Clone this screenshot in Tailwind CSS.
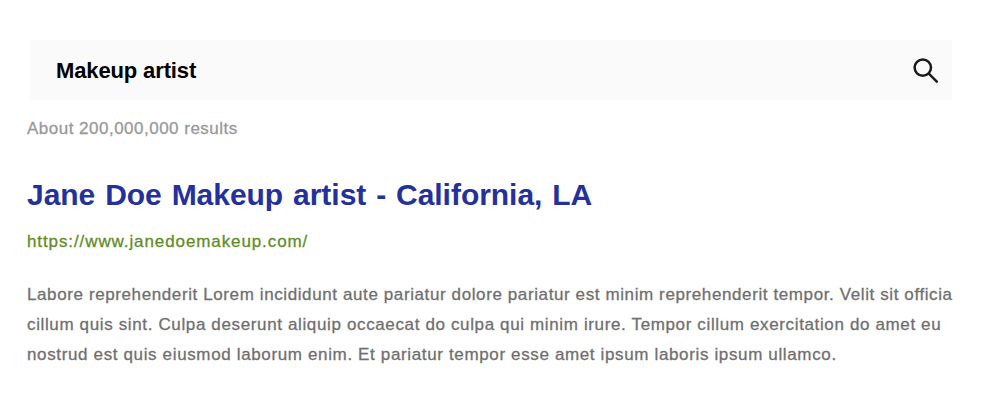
<!DOCTYPE html>
<html lang="en"><head><meta charset="utf-8"><title>Search results</title>
<script src="https://cdn.jsdelivr.net/npm/@tailwindcss/browser@4"></script></head>
<body class="bg-white overflow-hidden font-['Liberation_Sans',Arial,sans-serif]">
<main class="pt-10 pl-[27px] whitespace-nowrap">
<div class="ml-[3px] w-[922px] h-[60px] bg-[#fafafa] flex items-center justify-between pl-[26px] pr-[13px]">
<span class="text-[22px] tracking-[-0.13px] font-bold text-black">Makeup artist</span>
<svg class="w-[26px] h-[26px]" viewBox="0 0 26 26" fill="none" stroke="#1a1a1a" stroke-width="2.5" stroke-linecap="round"><circle cx="9.8" cy="10.6" r="8.2"/><path d="M15.8 16.6l8 8"/></svg>
</div>
<p class="mt-[18px] leading-[22px] text-[17px] tracking-[0.49px] text-[#999] [-webkit-text-stroke:0.3px_#999]">About 200,000,000 results</p>
<h1 class="mt-[36px] leading-[38px] text-[30px] tracking-[-0.03px] [word-spacing:1.6px] font-bold text-[#24309c]">Jane Doe Makeup artist - California, LA</h1>
<p class="mt-[17px] leading-[22px] text-[17px] tracking-[0.9px] text-[#648c25] [-webkit-text-stroke:0.3px_#648c25]">https://www.janedoemakeup.com/</p>
<div class="mt-[27px] text-[17px] leading-[30px] text-[#6f6f6f] [-webkit-text-stroke:0.3px_#6f6f6f]">
<p class="tracking-[0.605px]">Labore reprehenderit Lorem incididunt aute pariatur dolore pariatur est minim reprehenderit tempor. Velit sit officia</p>
<p class="tracking-[0.635px]">cillum quis sint. Culpa deserunt aliquip occaecat do culpa qui minim irure. Tempor cillum exercitation do amet eu</p>
<p class="tracking-[0.64px]">nostrud est quis eiusmod laborum enim. Et pariatur tempor esse amet ipsum laboris ipsum ullamco.</p>
</div></main></body></html>
